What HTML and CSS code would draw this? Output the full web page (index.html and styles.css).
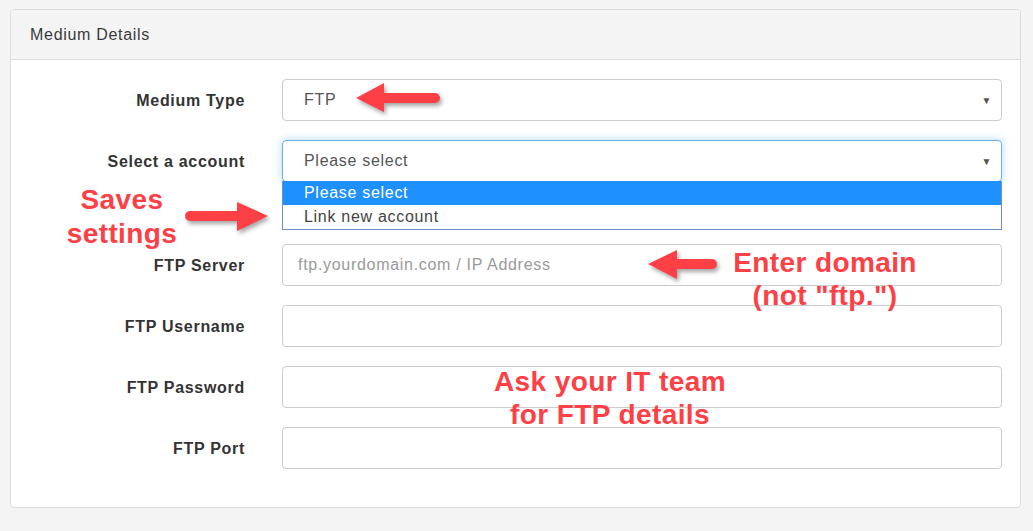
FILE: index.html
```html
<!DOCTYPE html>
<html lang="en">
  <head>
    <meta charset="UTF-8" />
    <meta name="viewport" content="width=device-width, initial-scale=1.0" />
    <title>Medium Details</title>
    <link rel="stylesheet" href="styles.css">
  </head>
  <body>
    <div class="page">
      <div class="panel">
        <div class="panel-heading">Medium Details</div>
        <div class="panel-body">
          <div class="form-row">
            <label class="form-label">Medium Type</label>
            <div class="select-box">
              <span>FTP</span>
              <span class="caret">&#9660;</span>
            </div>
          </div>
          <div class="form-row form-row-open">
            <label class="form-label">Select a account</label>
            <div class="select-wrap">
              <div class="select-box focused">
                <span>Please select</span>
                <span class="caret">&#9660;</span>
              </div>
              <ul class="select-options">
                <li class="active">Please select</li>
                <li>Link new account</li>
              </ul>
            </div>
          </div>
          <div class="form-row">
            <label class="form-label">FTP Server</label>
            <input class="form-input" type="text" placeholder="ftp.yourdomain.com / IP Address" />
          </div>
          <div class="form-row">
            <label class="form-label">FTP Username</label>
            <input class="form-input" type="text" />
          </div>
          <div class="form-row">
            <label class="form-label">FTP Password</label>
            <input class="form-input" type="password" />
          </div>
          <div class="form-row">
            <label class="form-label">FTP Port</label>
            <input class="form-input" type="text" />
          </div>
        </div>
      </div>

      <!-- annotations drawn over the form -->
      <svg class="arrow arrow-type" width="94" height="36" viewBox="0 0 94 36">
        <line x1="30" y1="17" x2="83" y2="17" stroke="#fd4046" stroke-width="10" stroke-linecap="round" />
        <polygon points="4,17 32,2 32,31" fill="#fd4046" />
      </svg>
      <svg class="arrow arrow-saves" width="94" height="36" viewBox="0 0 94 36">
        <line x1="9" y1="15" x2="60" y2="15" stroke="#fd4046" stroke-width="10" stroke-linecap="round" />
        <polygon points="87,15 56,1 56,30" fill="#fd4046" />
      </svg>
      <svg class="arrow arrow-domain" width="80" height="36" viewBox="0 0 80 36">
        <line x1="30" y1="17" x2="68" y2="17" stroke="#fd4046" stroke-width="10" stroke-linecap="round" />
        <polygon points="4,17 33,3 33,32" fill="#fd4046" />
      </svg>

      <div class="note note-saves">Saves<br>settings</div>
      <div class="note note-domain">Enter domain<br>(not "ftp.")</div>
      <div class="note note-team">Ask your IT team<br>for FTP details</div>
    </div>
  </body>
</html>
```
FILE: styles.css
```css
body {
  margin: 0;
  background-color: #f4f4f4;
  font-family: "Liberation Sans", Arial, sans-serif;
  color: #333;
}

.page {
  position: relative;
  height: 531px;
  overflow: hidden;
}

.panel {
  margin: 9px 12px 0 10px;
  background: #fff;
  border: 1px solid #dcdcdc;
  border-radius: 4px;
  letter-spacing: 0.7px;
}

.panel-heading {
  height: 49px;
  line-height: 49px;
  padding-left: 19px;
  font-size: 16px;
  color: #3a3a3a;
  background: #f4f4f4;
  border-bottom: 1px solid #dcdcdc;
  border-radius: 4px 4px 0 0;
}

.panel-body {
  padding: 19px 18px 38px 0;
}

.form-row {
  display: grid;
  grid-template-columns: 234px 720px;
  column-gap: 37px;
  align-items: center;
  margin-bottom: 19px;
}

.form-row:last-child {
  margin-bottom: 0;
}

.form-row-open {
  margin-bottom: 62px;
}

.form-label {
  text-align: right;
  font-weight: bold;
  font-size: 16px;
  color: #333;
  padding-top: 1px;
}

.select-wrap {
  position: relative;
}

.select-box {
  box-sizing: border-box;
  height: 42px;
  display: flex;
  align-items: center;
  justify-content: space-between;
  padding: 0 9px 0 21px;
  font-size: 16px;
  color: #555;
  border: 1px solid #ccc;
  border-radius: 4px;
}

.select-box.focused {
  border-color: #66afe9;
  box-shadow: 0 0 8px rgba(102, 175, 233, 0.5);
}

.caret {
  font-size: 10px;
  color: #555;
}

.select-options {
  position: absolute;
  top: 41px;
  left: 0;
  right: 0;
  margin: 0;
  padding: 0;
  list-style: none;
  background: #fff;
  border: 1px solid #6f8fc6;
  border-top: none;
  font-size: 16px;
  color: #444;
}

.select-options li {
  height: 24px;
  line-height: 23px;
  padding-left: 21px;
}

.select-options li.active {
  background: #1e90ff;
  color: #fff;
}

.form-input {
  box-sizing: border-box;
  height: 42px;
  padding: 0 15px;
  font-family: inherit;
  font-size: 16px;
  letter-spacing: 0.7px;
  color: #555;
  border: 1px solid #ccc;
  border-radius: 4px;
  outline: none;
}

.form-input::placeholder {
  color: #999;
}

.arrow {
  position: absolute;
  filter: drop-shadow(2px 3px 2px rgba(0, 0, 0, 0.35));
}

.arrow-type {
  left: 352px;
  top: 81px;
}

.arrow-saves {
  left: 181px;
  top: 201px;
}

.arrow-domain {
  left: 644px;
  top: 247px;
}

.note {
  position: absolute;
  font-weight: bold;
  font-size: 28px;
  letter-spacing: 0.4px;
  color: #fd4046;
  text-align: center;
  line-height: 34px;
}

.note-saves {
  left: 62px;
  top: 183px;
  width: 120px;
}

.note-domain {
  left: 725px;
  top: 246px;
  width: 200px;
  line-height: 33px;
}

.note-team {
  left: 480px;
  top: 365px;
  width: 260px;
  line-height: 33px;
}
```
